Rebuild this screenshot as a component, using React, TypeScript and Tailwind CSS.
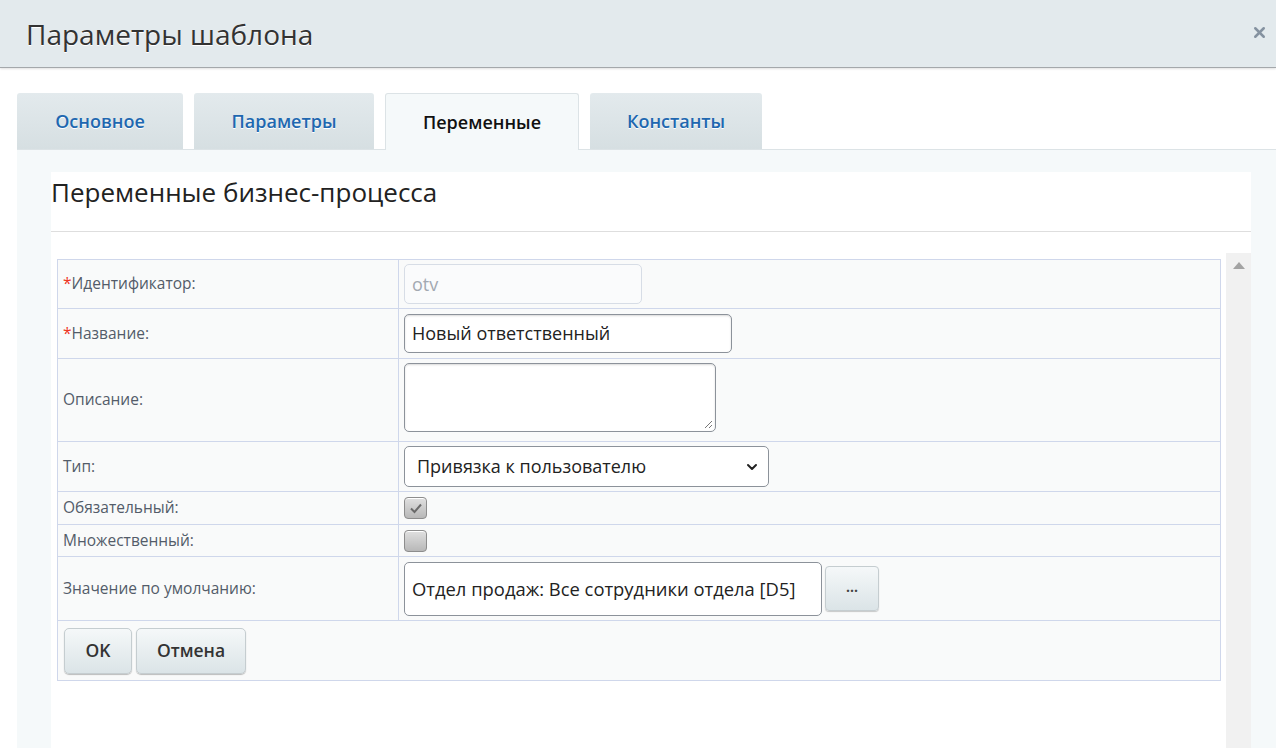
import { ChevronDown, X } from 'lucide-react';

const font = { fontFamily: '"Open Sans", "Noto Sans", Arial, sans-serif' };

const tabs = [
  { label: 'Основное', w: 'w-[166px]' },
  { label: 'Параметры', w: 'w-[180px]' },
  { label: 'Переменные', w: 'w-[194px]', active: true },
  { label: 'Константы', w: 'w-[172px]' },
];

const Label = ({ text, required }: { text: string; required?: boolean }) => (
  <td className="w-[341px] border border-[#cfd7eb] pl-[5px] text-[15.5px] text-[#535c69] align-middle">
    {required && <span className="text-[#e32]">*</span>}
    {text}
  </td>
);

const Checkbox = ({ checked }: { checked?: boolean }) => (
  <div className="w-[23px] h-[22px] rounded-[4px] border border-[#8d8d8d] bg-gradient-to-b from-[#e0e0e0] to-[#b8b8b8] shadow-[inset_0_1px_0_#fff] flex items-center justify-center">
    {checked && (
      <svg width="14" height="12" viewBox="0 0 14 12">
        <path d="M2 6.5 L5.5 10 L12 2.5" fill="none" stroke="#6a6a6a" strokeWidth="2" />
      </svg>
    )}
  </div>
);

export default function App() {
  return (
    <div className="w-[1276px] h-[748px] overflow-hidden bg-white flex flex-col" style={font}>
      {/* Header */}
      <div className="h-[68px] shrink-0 bg-[#e3eaed] border-b border-[#a4a8ab] shadow-[0_1px_2px_rgba(0,0,0,0.12)] flex items-center justify-between pl-[26px] pr-[8px]">
        <h1 className="text-[28px] text-[#333] [text-shadow:0_1px_0_#fff] pt-[1px]">Параметры шаблона</h1>
        <X className="w-[17px] h-[17px] text-[#8592a0] mb-[3px]" strokeWidth={3.5} />
      </div>

      {/* Tabs */}
      <div className="pl-[17px] pt-[25px] flex items-end">
        {tabs.map((t) => (
          <div
            key={t.label}
            className={`${t.w} mr-[11px] rounded-t-[3px] flex items-center justify-center text-[18px] font-semibold ${
              t.active
                ? 'bg-[#f5f9fa] border border-b-0 border-[#dce3e6] text-[#111] h-[57px] -mb-[1px] relative'
                : 'h-[56px] bg-gradient-to-b from-[#e3eaed] to-[#d6dfe2] text-[#2067b0] [text-shadow:0_1px_0_#fff]'
            }`}
          >
            {t.label}
          </div>
        ))}
      </div>

      {/* Panel */}
      <div className="flex-1 ml-[17px] bg-[#f5f9fa] border-t border-[#dce3e6] pt-[22px] pl-[34px] pr-[25px]">
        <div className="bg-white h-full flex flex-col">
          <div className="h-[60px] border-b border-[#dedede] text-[26px] text-[#222] leading-none pt-[7px]">
            Переменные бизнес-процесса
          </div>
          <div className="flex pt-[21px] pl-[6px]">
            <div className="w-[1164px] pt-[6px]">
              <table className="w-full border-collapse bg-[#f9fafa] border border-[#cfd7eb]">
                <tbody>
                  <tr className="h-[49px]">
                    <Label text="Идентификатор:" required />
                    <td className="border border-[#cfd7eb] pl-[5px]">
                      <div className="w-[238px] h-[40px] rounded-[5px] border border-[#d7dde6] bg-[#fafbfc] flex items-center pl-[7px] text-[18px] text-[#a3a9b1]">
                        otv
                      </div>
                    </td>
                  </tr>
                  <tr className="h-[50px]">
                    <Label text="Название:" required />
                    <td className="border border-[#cfd7eb] pl-[5px]">
                      <div className="w-[328px] h-[39px] rounded-[5px] border border-[#8c929a] bg-white shadow-[inset_0_1px_2px_rgba(0,0,0,0.15)] flex items-center pl-[7px] text-[18px] text-[#222]">
                        Новый ответственный
                      </div>
                    </td>
                  </tr>
                  <tr className="h-[83px]">
                    <Label text="Описание:" />
                    <td className="border border-[#cfd7eb] pl-[5px] align-top pt-[4px]">
                      <div className="relative w-[312px] h-[69px] rounded-[5px] border border-[#8c929a] bg-white shadow-[inset_0_1px_2px_rgba(0,0,0,0.15)]">
                        <svg className="absolute right-[2px] bottom-[2px]" width="10" height="10" viewBox="0 0 10 10">
                          <path d="M9 2 L2 9 M9 6 L6 9" stroke="#777" strokeWidth="1" />
                        </svg>
                      </div>
                    </td>
                  </tr>
                  <tr className="h-[50px]">
                    <Label text="Тип:" />
                    <td className="border border-[#cfd7eb] pl-[5px]">
                      <div className="w-[365px] h-[41px] rounded-[5px] border border-[#8c929a] bg-white flex items-center justify-between pl-[12px] pr-[8px] text-[18px] text-[#222]">
                        Привязка к пользователю
                        <ChevronDown className="w-[16px] h-[16px] text-[#222]" strokeWidth={3} />
                      </div>
                    </td>
                  </tr>
                  <tr className="h-[33px]">
                    <Label text="Обязательный:" />
                    <td className="border border-[#cfd7eb] pl-[5px]">
                      <Checkbox checked />
                    </td>
                  </tr>
                  <tr className="h-[32px]">
                    <Label text="Множественный:" />
                    <td className="border border-[#cfd7eb] pl-[5px]">
                      <Checkbox />
                    </td>
                  </tr>
                  <tr className="h-[64px]">
                    <Label text="Значение по умолчанию:" />
                    <td className="border border-[#cfd7eb] pl-[5px]">
                      <div className="flex items-center gap-[3px]">
                        <div className="w-[418px] h-[54px] rounded-[5px] border border-[#8c929a] bg-white flex items-center pl-[7px] text-[18.4px] text-[#222]">
                          Отдел продаж: Все сотрудники отдела [D5]
                        </div>
                        <div className="w-[54px] h-[45px] rounded-[4px] border border-[#c5cdd0] bg-gradient-to-b from-[#f5f8f9] to-[#dbe4e7] shadow-[0_1px_1px_rgba(0,0,0,0.2)] flex items-center justify-center text-[14px] font-bold text-[#444] pb-[4px]">
                          ...
                        </div>
                      </div>
                    </td>
                  </tr>
                  <tr className="h-[60px]">
                    <td colSpan={2} className="border border-[#cfd7eb] pl-[6px]">
                      <div className="flex gap-[4px]">
                        {['OK', 'Отмена'].map((b) => (
                          <div
                            key={b}
                            className={`${b === 'OK' ? 'w-[68px]' : 'w-[110px]'} h-[46px] rounded-[5px] border border-[#c5cdd0] bg-gradient-to-b from-[#f5f8f9] to-[#dbe4e7] shadow-[0_1px_1px_rgba(0,0,0,0.25)] flex items-center justify-center text-[17.5px] font-semibold text-[#333]`}
                          >
                            {b}
                          </div>
                        ))}
                      </div>
                    </td>
                  </tr>
                </tbody>
              </table>
            </div>
            <div className="ml-[5px] w-[25px] h-[600px] bg-[#f1f1f1] flex justify-center pt-[9px]">
              <svg width="12" height="7" viewBox="0 0 12 7">
                <path d="M6 0 L12 7 L0 7 Z" fill="#a3a3a3" />
              </svg>
            </div>
          </div>
        </div>
      </div>
    </div>
  );
}
